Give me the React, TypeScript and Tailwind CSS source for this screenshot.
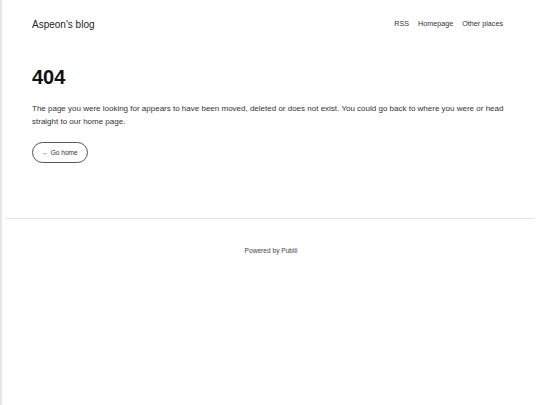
export default function App() {
  const nav = ['RSS', 'Homepage', 'Other places'];

  return (
    <div className="min-h-screen bg-white border-l-2 border-[#e6e6e6] font-['Liberation_Sans',Arial,sans-serif] text-[#222]">
      {/* Header */}
      <header className="h-[48px] pl-[30px] pr-[32px] flex items-center justify-between">
        <a className="text-[10px] text-[#222]">Aspeon&apos;s blog</a>
        <nav className="flex items-center gap-[9px] pr-[5px]">
          {nav.map((item) => (
            <a key={item} className="text-[7.2px] text-[#333]">
              {item}
            </a>
          ))}
        </nav>
      </header>

      {/* Error content */}
      <main className="pl-[30px] pr-[32px]">
        <h1 className="mt-[19px] text-[20px] leading-[20px] font-bold text-[#111]">404</h1>
        <p className="mt-[15px] text-[8px] leading-[13px] text-[#333] max-w-[478px]">
          The page you were looking for appears to have been moved, deleted or does not exist. You could go back to where you were or head straight to our home page.
        </p>
        <button className="mt-[14px] h-[21px] w-[56px] rounded-full border border-[#555] flex items-center justify-center text-[6.6px] text-[#333]">
          ← Go home
        </button>
      </main>

      <hr className="mt-[55px] ml-[4px] mr-[6px] border-t border-[#e4e4e4]" />

      {/* Footer */}
      <footer className="h-[64px] flex items-center justify-center">
        <p className="text-[6.6px] text-[#444]">Powered by Publii</p>
      </footer>
    </div>
  );
}
